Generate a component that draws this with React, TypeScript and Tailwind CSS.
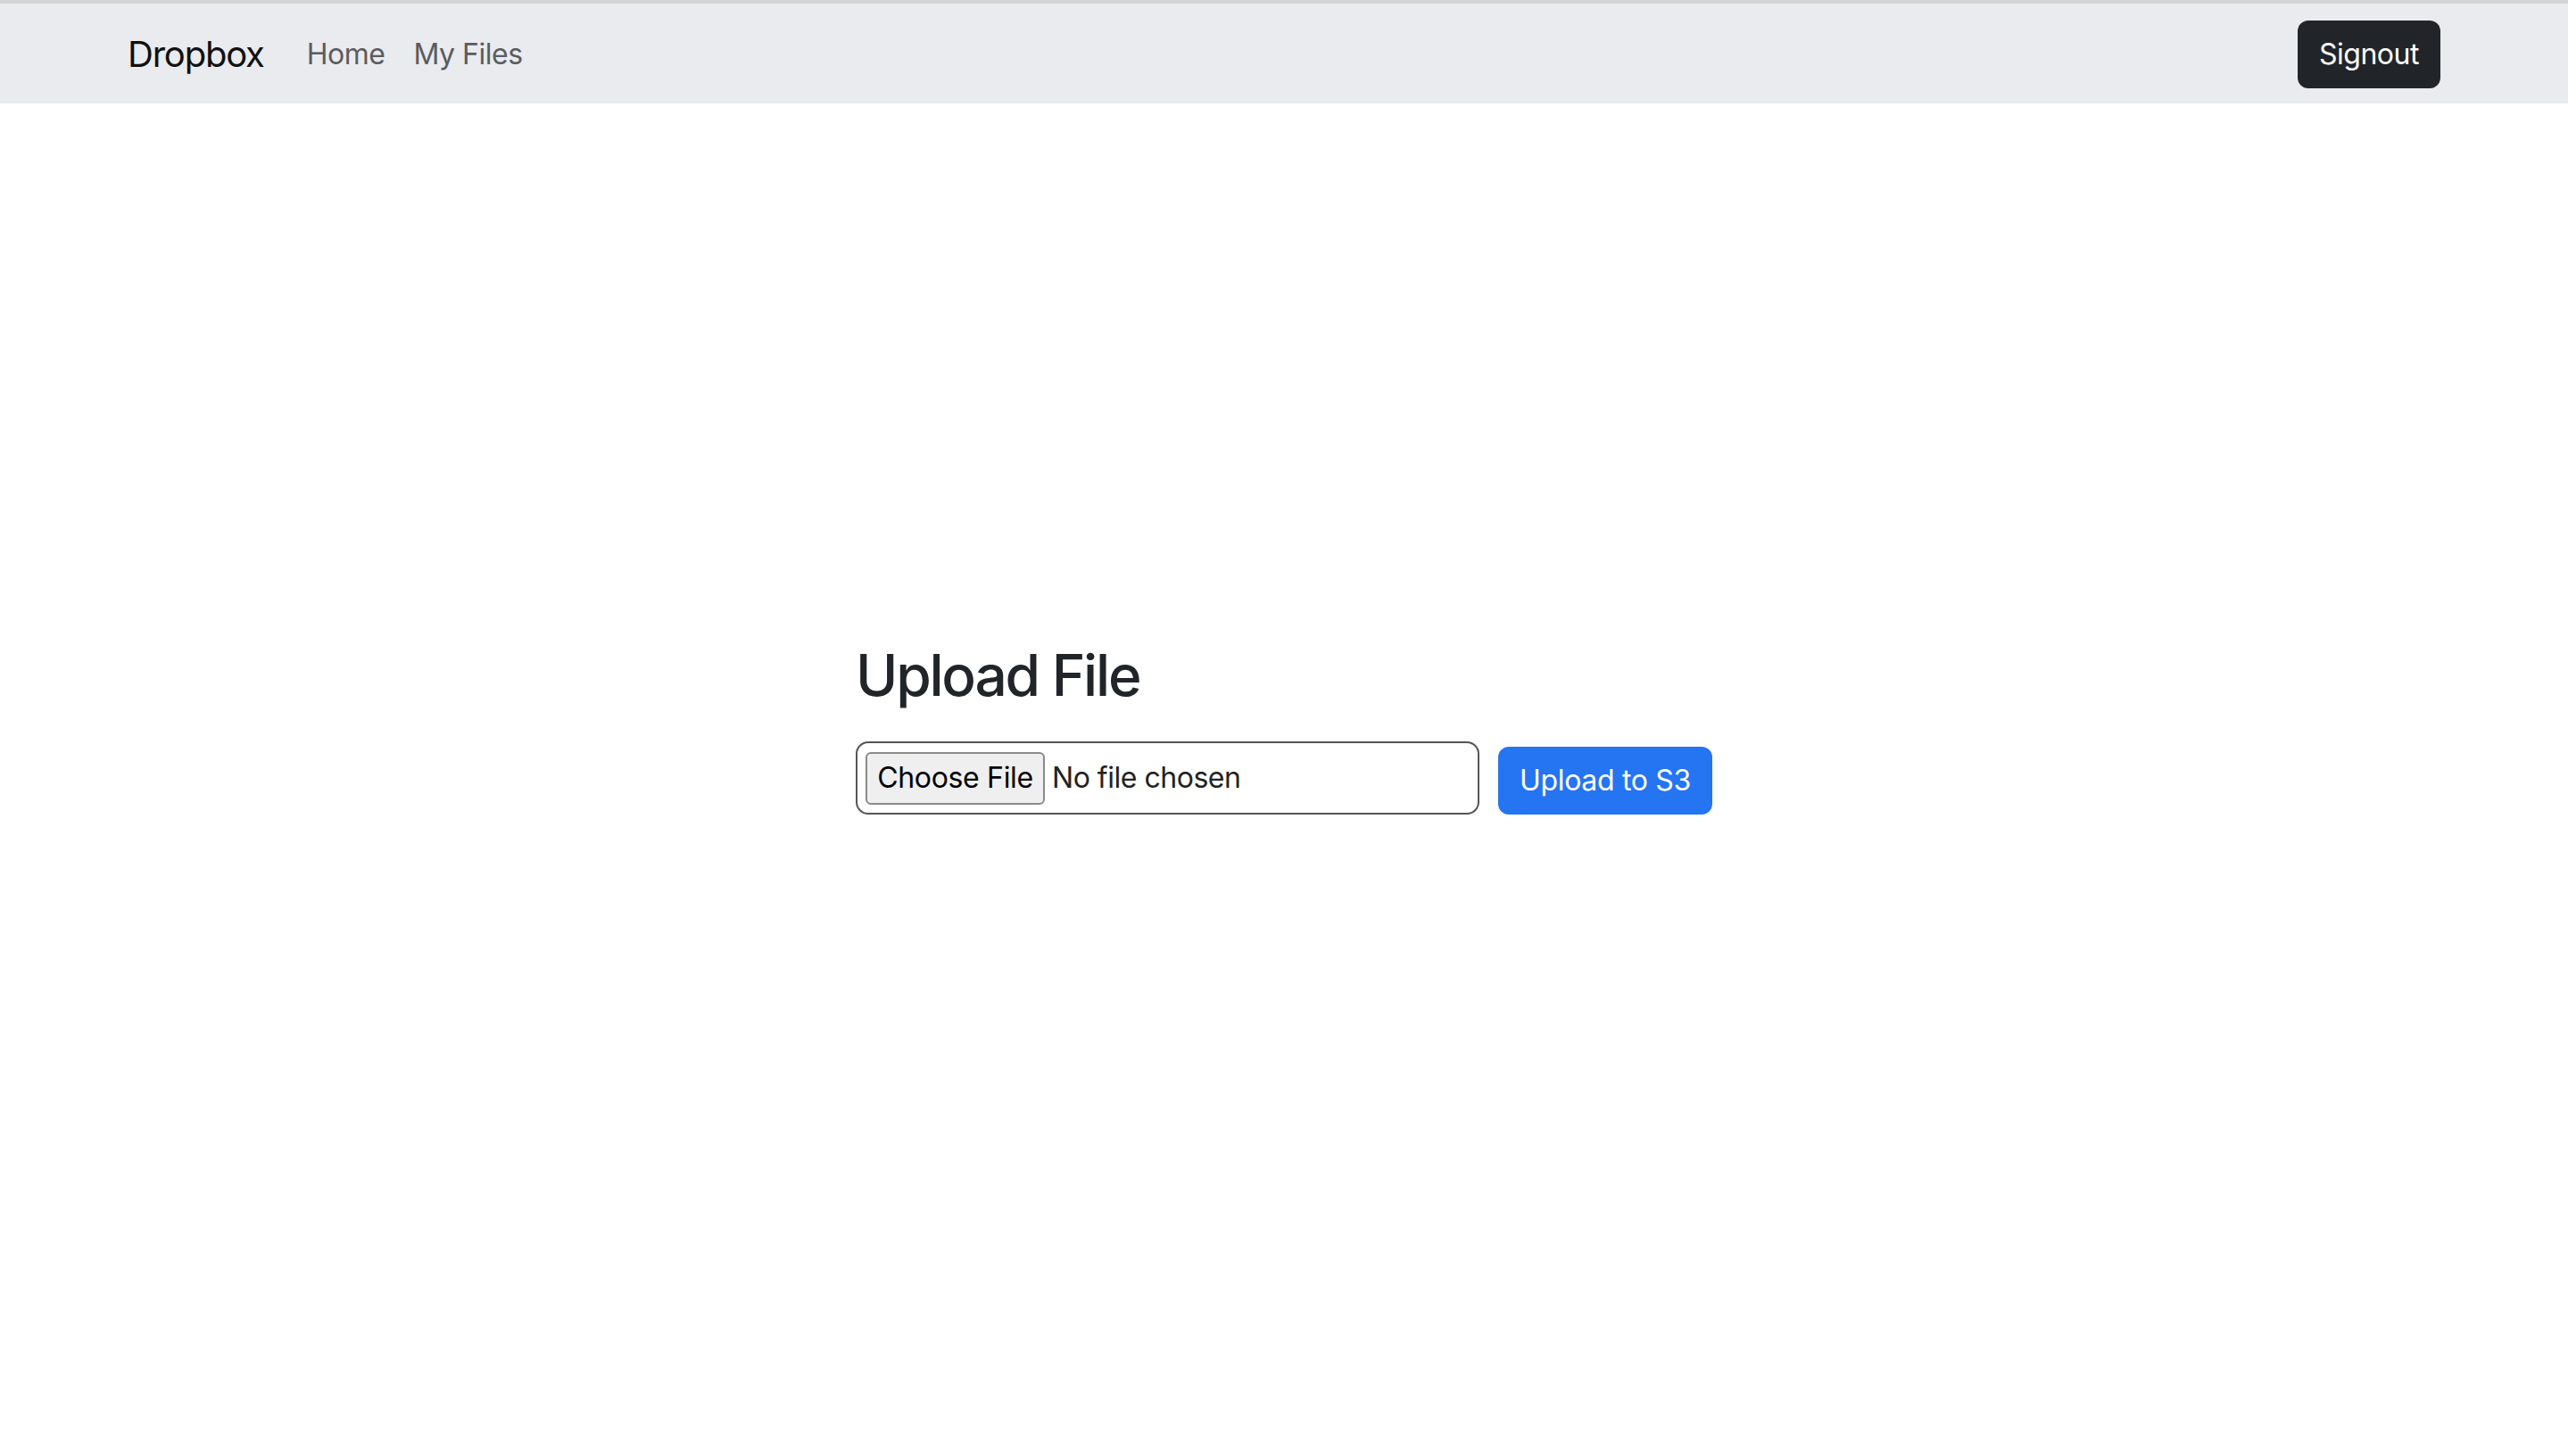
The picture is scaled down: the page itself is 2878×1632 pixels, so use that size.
import React from "react";

const Navbar: React.FC = () => {
	return (
		<nav className="h-[112px] bg-[#e9ebef] pt-[2px]">
			<div className="mx-auto flex h-full max-w-[2640px] items-center justify-between px-[24px]">
				<div className="flex items-center">
					<span className="mr-[32px] text-[40px] leading-none tracking-[-0.03em] text-[#111]">Dropbox</span>
					<a className="px-[16px] text-[32px] leading-none tracking-[-0.015em] text-[#5b5c5e]">Home</a>
					<a className="px-[16px] text-[32px] leading-none tracking-[-0.015em] text-[#5b5c5e]">My Files</a>
				</div>
				<button className="h-[76px] rounded-[12px] bg-[#212529] px-[24px] text-[32px] tracking-[-0.015em] text-white">
					Signout
				</button>
			</div>
		</nav>
	);
};

const UploadForm: React.FC = () => {
	return (
		<div className="w-[960px]">
			<h2 className="mb-[36px] text-[64px] font-medium leading-[1.2] tracking-[-0.035em] text-[#212529]">
				Upload File
			</h2>
			<div className="flex items-end">
				<div className="flex h-[82px] w-[699px] items-center rounded-[14px] border-2 border-[#555] px-[9px]">
					<span className="flex h-[59px] w-[201px] items-center justify-center rounded-[6px] border-2 border-[#8a8a8a] bg-[#efefef] text-[32px] tracking-[-0.01em] text-black">
						Choose File
					</span>
					<span className="ml-[8px] text-[32px] tracking-[-0.015em] text-[#222]">No file chosen</span>
				</div>
				<button className="ml-[21px] h-[76px] w-[240px] rounded-[12px] bg-[#2574f2] text-[32px] tracking-[-0.01em] text-white">
					Upload to S3
				</button>
			</div>
		</div>
	);
};

export default function App() {
	return (
		<div className="min-h-screen bg-white font-['Inter',sans-serif]">
			<div className="h-[4px] bg-[#d4d4d4]" />
			<Navbar />
			<main className="flex h-[1516px] items-center justify-center pb-[116px]">
				<UploadForm />
			</main>
		</div>
	);
}
